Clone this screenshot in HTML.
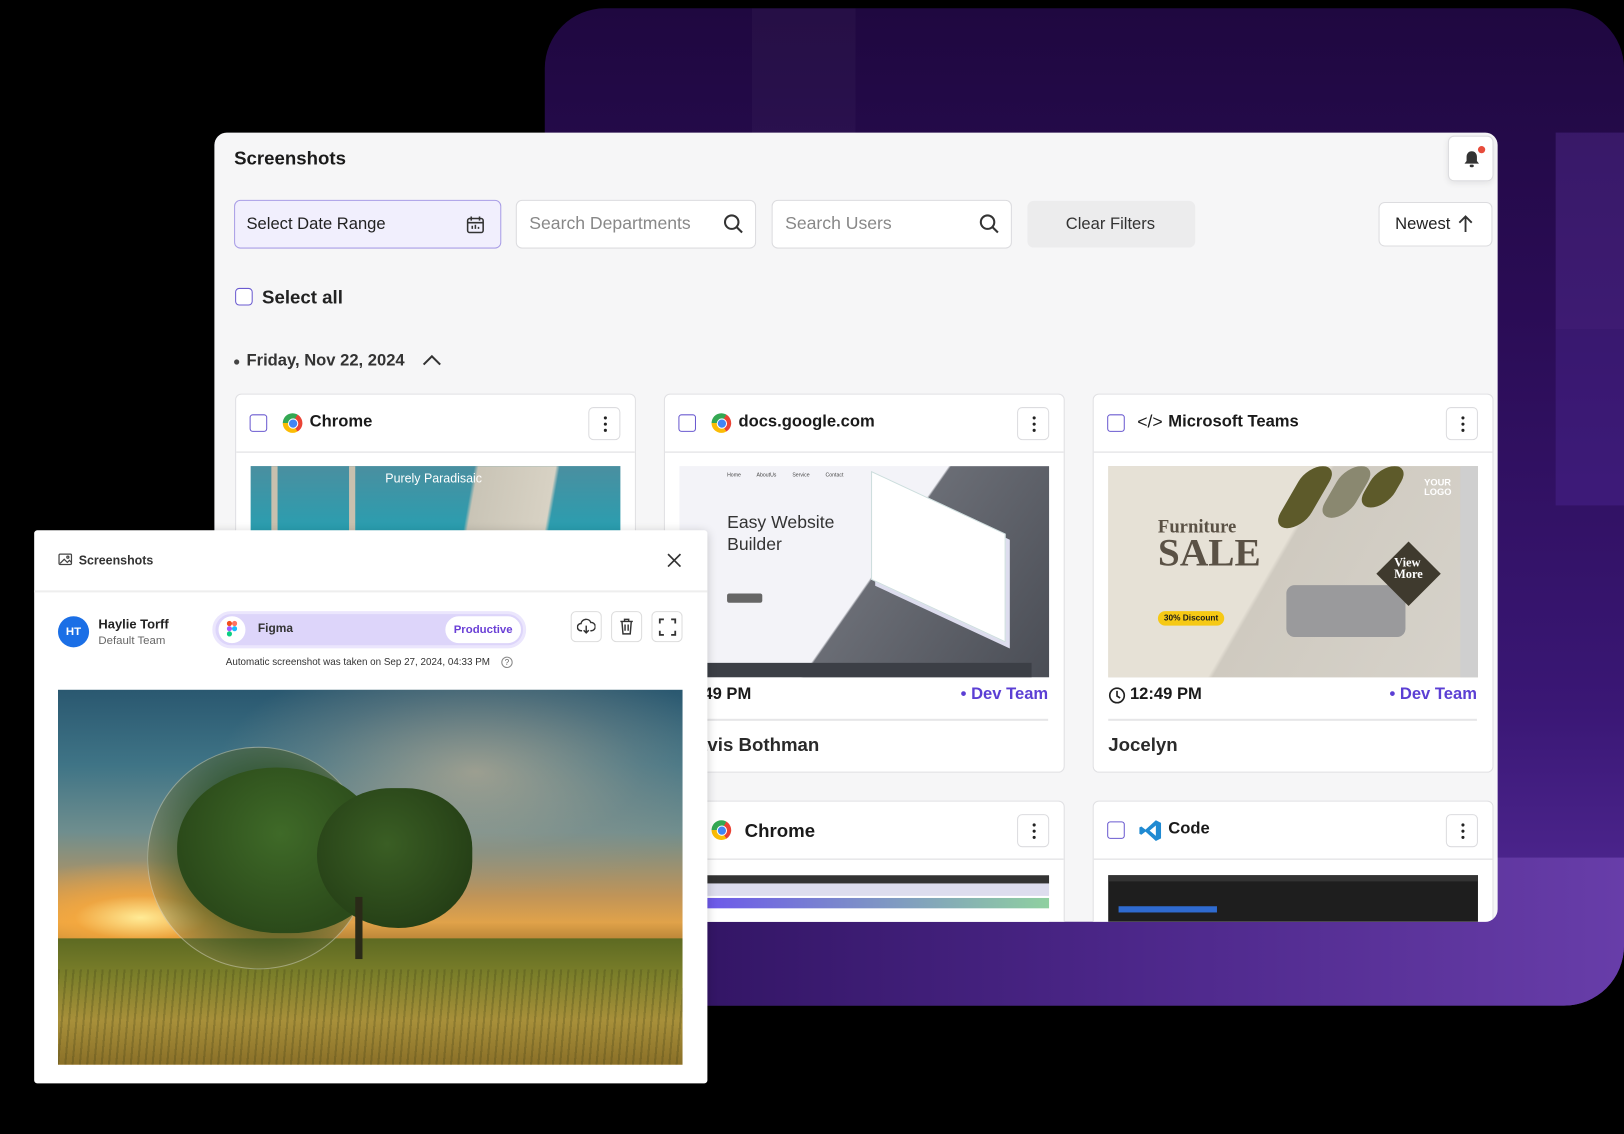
<!DOCTYPE html>
<html><head><meta charset="utf-8">
<style>
*{box-sizing:border-box;margin:0;padding:0}
html,body{width:1624px;height:1134px;overflow:hidden;background:#000;font-family:"Liberation Sans",Arial,sans-serif;color:#1a1a1a}
#s{position:absolute;left:0;top:0;width:1568px;height:1095px;transform:scale(1.035714);transform-origin:0 0}
.a{position:absolute}
.bg{left:526px;top:8px;width:1042px;height:963px;border-radius:58px;background:linear-gradient(180deg,#1f0840 0%,#2a0c55 30%,#3a1775 70%,#5a30a0 100%);overflow:hidden}
.panel{left:207px;top:128px;width:1239px;height:762px;background:#f6f6f7;border-radius:12px 12px 12px 0;overflow:hidden}
.box{position:absolute;border-radius:6px;background:#fff;border:1px solid #dcdcdf}
.card{position:absolute;width:387px;background:#fff;border:1px solid #e0e0e3;border-radius:6px;overflow:hidden}
.ch{height:56px;border-bottom:1px solid #dcdcdf;position:relative}
.cb{position:absolute;width:17px;height:17px;border:1.5px solid #6b5bd0;border-radius:3px;background:#fff}
.dots{position:absolute;right:14px;top:12px;width:31px;height:32px;border:1px solid #dcdcdf;border-radius:5px;background:#fff}
.dots i{position:absolute;left:14px;width:3px;height:3px;border-radius:50%;background:#222}
.ct{position:absolute;top:18px;font-size:16px;font-weight:bold}
.chrome{position:absolute;width:19px;height:19px;border-radius:50%;background:conic-gradient(from 30deg,#ea4335 0 120deg,#fbbc05 120deg 240deg,#34a853 240deg 360deg)}
.chrome:after{content:"";position:absolute;border-radius:50%;background:#4285f4;border:1.5px solid #fff;box-sizing:border-box;width:10px;height:10px;left:4.5px;top:4.5px}
.img{position:absolute;left:14px;width:357px;height:204px;top:69px;overflow:hidden}
.time{position:absolute;top:281px;font-size:16px;font-weight:bold}
.team{position:absolute;right:15px;top:281px;font-size:16px;font-weight:bold;color:#5b3fd4}
.div{position:absolute;left:14px;right:15px;top:313px;height:2px;background:#e6e6e8}
.nm{position:absolute;left:14px;top:328px;font-size:18px;font-weight:bold;color:#2a2a2a}
.modal{left:33px;top:512px;width:650px;height:534px;background:#fff;border-radius:3px;box-shadow:0 2px 10px rgba(0,0,0,.2)}
.ib{position:absolute;top:78px;width:30px;height:30px;border:1px solid #ddd;border-radius:5px;background:#fff}
</style></head><body>
<div id="s">
<div class="a bg">
  <div class="a" style="left:200px;top:0;width:100px;height:140px;background:rgba(255,255,255,.03)"></div>
  <div class="a" style="left:976px;top:120px;width:120px;height:190px;background:rgba(120,70,200,.25)"></div>
  <div class="a" style="left:976px;top:310px;width:120px;height:170px;background:rgba(90,50,170,.3)"></div>
  <div class="a" style="left:0;top:820px;width:1100px;height:150px;background:linear-gradient(90deg,#2a0f58,#4b2688 50%,#6b40ad)"></div>
</div>

<div class="a panel">
  <div class="a" style="left:19px;top:15px;font-size:18px;font-weight:bold">Screenshots</div>
  <div class="box" style="left:1191px;top:3px;width:44px;height:44px;box-shadow:0 2px 6px rgba(0,0,0,.08)">
    <svg class="a" style="left:12px;top:12px" width="20" height="20" viewBox="0 0 20 20"><path d="M10 2c-3 0-5 2.3-5 5.5v4L3 14h14l-2-2.5v-4C15 4.3 13 2 10 2z" fill="#333"/><rect x="8" y="15" width="4" height="2.5" rx="1.2" fill="#333"/></svg>
    <div class="a" style="left:28px;top:9px;width:7px;height:7px;border-radius:50%;background:#e74c3c"></div>
  </div>
  <div class="box" style="left:19px;top:65px;width:258px;height:47px;background:#f1effd;border-color:#a99ee6"></div>
  <div class="a" style="left:31px;top:80px;font-size:16px;color:#222">Select Date Range</div>
  <svg class="a" style="left:242px;top:79px" width="20" height="20" viewBox="0 0 20 20" fill="none" stroke="#333" stroke-width="1.5"><rect x="2.5" y="4" width="15" height="13.5" rx="2"/><path d="M2.5 8h15M6 2v4M14 2v4M7 14v-3M10 14v-4M13 14v-2"/></svg>
  <div class="box" style="left:291px;top:65px;width:232px;height:47px"></div>
  <div class="a" style="left:304px;top:78px;font-size:17px;color:#888">Search Departments</div>
  <svg class="a" style="left:490px;top:77px" width="22" height="22" viewBox="0 0 22 22" fill="none" stroke="#333" stroke-width="2"><circle cx="9.5" cy="9.5" r="6.5"/><path d="M14.5 14.5l5 5"/></svg>
  <div class="box" style="left:538px;top:65px;width:232px;height:47px"></div>
  <div class="a" style="left:551px;top:78px;font-size:17px;color:#888">Search Users</div>
  <svg class="a" style="left:737px;top:77px" width="22" height="22" viewBox="0 0 22 22" fill="none" stroke="#333" stroke-width="2"><circle cx="9.5" cy="9.5" r="6.5"/><path d="M14.5 14.5l5 5"/></svg>
  <div class="a" style="left:785px;top:66px;width:162px;height:45px;background:#ececed;border-radius:6px"></div>
  <div class="a" style="left:822px;top:80px;font-size:16px;color:#333">Clear Filters</div>
  <div class="box" style="left:1124px;top:67px;width:110px;height:43px"></div>
  <div class="a" style="left:1140px;top:80px;font-size:16px;color:#222">Newest</div>
  <svg class="a" style="left:1199px;top:78px" width="18" height="20" viewBox="0 0 18 20" fill="none" stroke="#333" stroke-width="1.8"><path d="M9 18V3M3 9l6-6 6 6"/></svg>
  <div class="cb" style="left:20px;top:150px;border-radius:4px"></div>
  <div class="a" style="left:46px;top:149px;font-size:18px;font-weight:bold;color:#222">Select all</div>
  <div class="a" style="left:19px;top:219px;width:5px;height:5px;border-radius:50%;background:#444"></div>
  <div class="a" style="left:31px;top:212px;font-size:16px;font-weight:bold;color:#333">Friday, Nov 22, 2024</div>
  <svg class="a" style="left:200px;top:212px" width="20" height="16" viewBox="0 0 20 16" fill="none" stroke="#333" stroke-width="2"><path d="M2 12l8-8 8 8"/></svg>

  <div class="card" style="left:20px;top:252px;height:366px">
    <div class="ch"><div class="cb" style="left:13px;top:19px"></div><div class="chrome" style="left:45px;top:18px"></div><div class="ct" style="left:71px">Chrome</div><div class="dots"><i style="top:8px"></i><i style="top:14px"></i><i style="top:20px"></i></div></div>
    <div class="img" style="background:linear-gradient(180deg,#4a8fa0 0%,#1fa3b5 40%,#15889c 100%)">
      <div class="a" style="left:0;top:0;width:357px;height:204px;background:linear-gradient(100deg,transparent 55%,#c9c4b6 56%,#d8d2c4 75%,transparent 76%)"></div>
      <div class="a" style="left:130px;top:5px;color:#fff;font-size:12px">Purely Paradisaic</div>
      <div class="a" style="left:20px;top:0;width:6px;height:204px;background:#c8c0ae"></div>
      <div class="a" style="left:95px;top:0;width:6px;height:204px;background:#c8c0ae"></div>
    </div>
  </div>
  <div class="card" style="left:434px;top:252px;height:366px">
    <div class="ch"><div class="cb" style="left:13px;top:19px"></div><div class="chrome" style="left:45px;top:18px"></div><div class="ct" style="left:71px">docs.google.com</div><div class="dots"><i style="top:8px"></i><i style="top:14px"></i><i style="top:20px"></i></div></div>
    <div class="img" style="background:#f3f3f8">
      <div class="a" style="left:0;top:0;width:357px;height:204px;background:linear-gradient(125deg,transparent 52%,#6a6d75 52.5%,#4a4d55 100%)"></div>
      <div class="a" style="left:0;top:190px;width:340px;height:14px;background:#3c3f46"></div>
      <div class="a" style="left:185px;top:35px;width:130px;height:105px;background:#fff;border:1px solid #cdd;transform:skewY(25deg);box-shadow:4px 4px 0 #dde"></div>
      <div class="a" style="left:46px;top:6px;font-size:5px;color:#444;word-spacing:14px">Home AboutUs Service Contact</div>
      <div class="a" style="left:46px;top:44px;font-size:17px;color:#333;line-height:21px">Easy Website<br>Builder</div>
      <div class="a" style="left:46px;top:123px;width:34px;height:9px;background:#666;border-radius:2px"></div>
    </div>
    <div class="time" style="left:14px">12:49 PM</div><div class="team">• Dev Team</div><div class="div"></div><div class="nm">Travis Bothman</div>
  </div>
  <div class="card" style="left:848px;top:252px;height:366px">
    <div class="ch"><div class="cb" style="left:13px;top:19px"></div>
      <div class="ct" style="left:42px;font-weight:normal;font-size:17px;top:17px">&lt;/&gt;</div><div class="ct" style="left:72px">Microsoft Teams</div><div class="dots"><i style="top:8px"></i><i style="top:14px"></i><i style="top:20px"></i></div></div>
    <div class="img" style="background:#dcd7cd">
      <div class="a" style="left:0;top:0;width:357px;height:204px;background:linear-gradient(120deg,#e6e1d6 45%,#cfcac0 46%,#d7d3cb 100%)"></div>
      <div class="a" style="left:175px;top:0;width:30px;height:60px;background:#5d5a2a;transform:skewX(-30deg);border-radius:15px"></div>
      <div class="a" style="left:215px;top:0;width:30px;height:50px;background:#8a8870;transform:skewX(-30deg);border-radius:15px"></div>
      <div class="a" style="left:250px;top:0;width:30px;height:40px;background:#5d5a2a;transform:skewX(-30deg);border-radius:15px"></div>
      <div class="a" style="left:48px;top:48px;font-family:'Liberation Serif',serif;font-weight:bold;font-size:18px;color:#5a5145">Furniture</div>
      <div class="a" style="left:48px;top:62px;font-family:'Liberation Serif',serif;font-weight:bold;font-size:38px;color:#5a5145">SALE</div>
      <div class="a" style="left:48px;top:140px;width:64px;height:14px;background:#f6c915;border-radius:7px;font-size:8px;font-weight:bold;text-align:center;line-height:14px">30% Discount</div>
      <div class="a" style="left:172px;top:115px;width:115px;height:50px;background:#9a9a9c;border-radius:8px"></div>
      <div class="a" style="left:268px;top:82px;width:44px;height:44px;background:#3f3a2e;transform:rotate(45deg)"></div>
      <div class="a" style="left:276px;top:88px;color:#fff;font-family:'Liberation Serif',serif;font-weight:bold;font-size:12px;line-height:11px">View<br>More</div>
      <div class="a" style="left:305px;top:12px;color:#fff;font-weight:bold;font-size:9px;line-height:9px">YOUR<br>LOGO</div>
      <div class="a" style="left:340px;top:0;width:17px;height:204px;background:#cfcfcf"></div>
    </div>
    <svg class="a" style="left:14px;top:282px" width="17" height="17" viewBox="0 0 17 17" fill="none" stroke="#222" stroke-width="1.6"><circle cx="8.5" cy="8.5" r="7"/><path d="M8.5 4v5l3 2"/></svg>
    <div class="time" style="left:35px">12:49 PM</div><div class="team">• Dev Team</div><div class="div"></div><div class="nm">Jocelyn</div>
  </div>

  <div class="card" style="left:434px;top:645px;height:200px">
    <div class="ch"><div class="chrome" style="left:45px;top:18px"></div><div class="ct" style="left:77px;font-size:18px">Chrome</div><div class="dots"><i style="top:8px"></i><i style="top:14px"></i><i style="top:20px"></i></div></div>
    <div class="img" style="top:71px;height:60px;background:#fff">
      <div class="a" style="left:0;top:0;width:357px;height:8px;background:#333"></div>
      <div class="a" style="left:0;top:8px;width:357px;height:12px;background:#dde"></div>
      <div class="a" style="left:0;top:22px;width:357px;height:10px;background:linear-gradient(90deg,#6a4ff0,#8fd0a0)"></div>
    </div>
  </div>
  <div class="card" style="left:848px;top:645px;height:200px">
    <div class="ch"><div class="cb" style="left:13px;top:19px"></div>
      <svg class="a" style="left:44px;top:17px" width="22" height="22" viewBox="0 0 22 22"><path d="M16 1l5 2.5v15L16 21 6 12l-4 3-2-1V8l2-1 4 3L16 1zM16 6l-6 5 6 5z" fill="#1f8ad2"/></svg>
      <div class="ct" style="left:72px">Code</div><div class="dots"><i style="top:8px"></i><i style="top:14px"></i><i style="top:20px"></i></div></div>
    <div class="img" style="top:71px;height:60px;background:#1e1e1e">
      <div class="a" style="left:0;top:0;width:357px;height:6px;background:#333"></div>
      <div class="a" style="left:10px;top:30px;width:95px;height:6px;background:#2f6bd0"></div>
    </div>
  </div>
</div>

<div class="a modal">
  <svg class="a" style="left:23px;top:22px" width="14" height="13" viewBox="0 0 14 13" fill="none" stroke="#444" stroke-width="1.2"><rect x="1" y="1" width="12" height="10" rx="1"/><path d="M2 10l4-4 3 3 2-2 2 2"/><circle cx="9.5" cy="4" r="1"/></svg>
  <div class="a" style="left:43px;top:22px;font-size:12px;font-weight:bold;color:#333">Screenshots</div>
  <svg class="a" style="left:611px;top:22px" width="14" height="14" viewBox="0 0 14 14" stroke="#333" stroke-width="1.6"><path d="M1 1l12 12M13 1L1 13"/></svg>
  <div class="a" style="left:0;top:58px;width:650px;height:2px;background:#eee"></div>
  <div class="a" style="left:23px;top:83px;width:30px;height:30px;border-radius:50%;background:#1b6fe6;color:#fff;font-size:11px;font-weight:bold;text-align:center;line-height:30px">HT</div>
  <div class="a" style="left:62px;top:84px;font-size:12.5px;font-weight:bold;color:#222">Haylie Torff</div>
  <div class="a" style="left:62px;top:101px;font-size:11px;color:#666">Default Team</div>
  <div class="a" style="left:172px;top:78px;width:303px;height:36px;border-radius:18px;background:#ddd5fa;border:3px solid #ebe6fd"></div>
  <div class="a" style="left:178px;top:83px;width:26px;height:26px;border-radius:50%;background:#fff"></div>
  <svg class="a" style="left:186px;top:87px" width="10" height="16" viewBox="0 0 10 15"><rect x="0" y="0" width="5" height="5" rx="2.5" fill="#f24e1e"/><rect x="5" y="0" width="5" height="5" rx="2.5" fill="#ff7262"/><rect x="0" y="5" width="5" height="5" rx="2.5" fill="#a259ff"/><circle cx="7.5" cy="7.5" r="2.5" fill="#1abcfe"/><rect x="0" y="10" width="5" height="5" rx="2.5" fill="#0acf83"/></svg>
  <div class="a" style="left:216px;top:89px;font-size:11.5px;font-weight:bold;color:#333">Figma</div>
  <div class="a" style="left:397px;top:83px;width:73px;height:26px;border-radius:13px;background:#fff;color:#6a3fd6;font-size:11px;font-weight:bold;text-align:center;line-height:26px">Productive</div>
  <div class="ib" style="left:518px"><svg class="a" style="left:5px;top:6px" width="18" height="16" viewBox="0 0 18 16" fill="none" stroke="#333" stroke-width="1.4"><path d="M5 12H4a3.5 3.5 0 010-7 5 5 0 019.5-1A3.5 3.5 0 0114 12h-1M9 7v7M6.5 11.5L9 14l2.5-2.5"/></svg></div>
  <div class="ib" style="left:557px"><svg class="a" style="left:6px;top:5px" width="16" height="18" viewBox="0 0 16 18" fill="none" stroke="#333" stroke-width="1.4"><path d="M2 4h12M6 4V2h4v2M3.5 4l1 12h7l1-12M6.5 7v6M9.5 7v6"/></svg></div>
  <div class="ib" style="left:596px"><svg class="a" style="left:6px;top:6px" width="17" height="17" viewBox="0 0 17 17" fill="none" stroke="#333" stroke-width="1.8"><path d="M1 5V1h4M12 1h4v4M16 12v4h-4M5 16H1v-4"/></svg></div>
  <div class="a" style="left:185px;top:122px;font-size:9.5px;color:#333">Automatic screenshot was taken on Sep 27, 2024, 04:33 PM</div>
  <div class="a" style="left:451px;top:122px;width:11px;height:11px;border:1px solid #888;border-radius:50%;font-size:8px;text-align:center;line-height:10px;color:#666">?</div>
  <div class="a" style="left:23px;top:154px;width:603px;height:362px;overflow:hidden;background:linear-gradient(180deg,#2a5870 0%,#3f7486 20%,#6f8e8e 38%,#c09458 55%,#e0a24a 62%,#c08a3a 66%)">
    <div class="a" style="left:150px;top:-20px;width:460px;height:220px;background:radial-gradient(ellipse at 55% 45%,rgba(215,185,150,.6),rgba(150,150,140,.3) 45%,transparent 70%)"></div>
    <div class="a" style="left:-100px;top:160px;width:360px;height:120px;background:radial-gradient(ellipse at center,rgba(255,235,150,1) 0%,rgba(250,170,60,.75) 25%,transparent 65%)"></div>
    <div class="a" style="left:0;top:240px;width:603px;height:122px;background:linear-gradient(180deg,#5d6a22 0%,#7c7f2a 30%,#a8903a 65%,#8a7028 100%)"></div>
    <div class="a" style="left:0;top:270px;width:603px;height:92px;background:repeating-linear-gradient(95deg,rgba(60,60,20,.25) 0 2px,transparent 2px 7px)"></div>
    <div class="a" style="left:86px;top:55px;width:215px;height:215px;border-radius:50%;background:radial-gradient(circle at 55% 45%,rgba(40,70,25,.9) 0%,rgba(50,80,30,.7) 45%,rgba(160,140,90,.35) 80%,rgba(200,180,140,.3) 100%);border:1px solid rgba(255,255,255,.35)"></div>
    <div class="a" style="left:115px;top:75px;width:200px;height:160px;border-radius:48% 52% 45% 50%;background:radial-gradient(ellipse at 50% 40%,#3f6a28,#2b4a1a 70%)"></div>
    <div class="a" style="left:250px;top:95px;width:150px;height:135px;border-radius:50% 45% 50% 55%;background:radial-gradient(ellipse at 45% 40%,#3a5e24,#253f16 75%)"></div>
    <div class="a" style="left:287px;top:200px;width:7px;height:60px;background:#2a2a18"></div>
  </div>
</div>
</div>
</body></html>
